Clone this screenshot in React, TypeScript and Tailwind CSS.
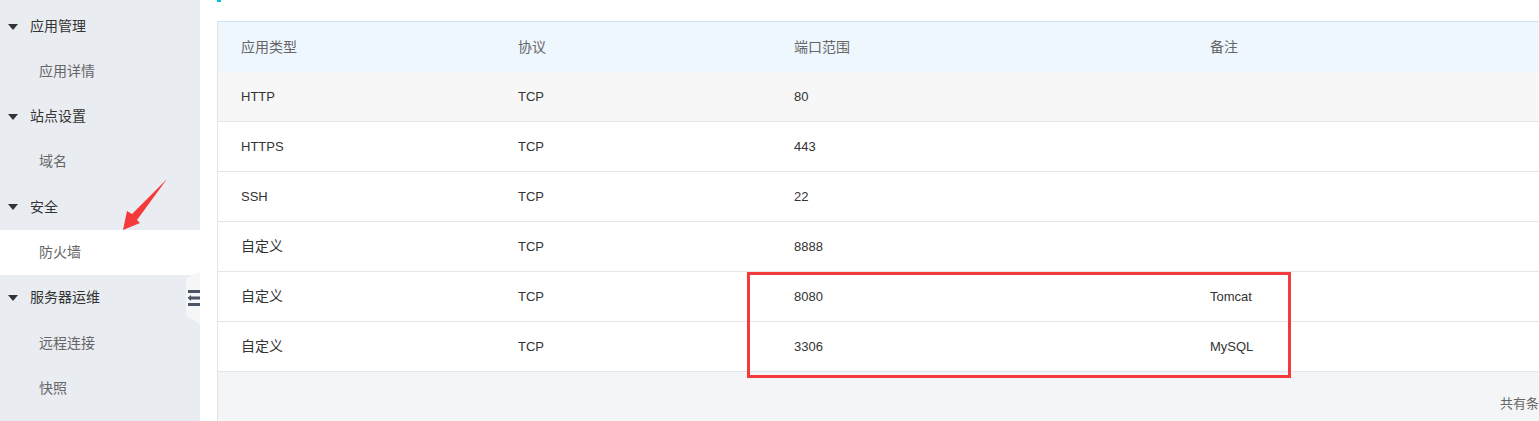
import React from "react";

const FONT = { fontFamily: '"Liberation Sans", "Noto Sans CJK SC", sans-serif' };

type NavItem = { label: string; group?: boolean; active?: boolean; h: string };

const NAV: NavItem[] = [
  { label: "应用管理", group: true, h: "h-[45px]" },
  { label: "应用详情", h: "h-[45px]" },
  { label: "站点设置", group: true, h: "h-[45px]" },
  { label: "域名", h: "h-[45px]" },
  { label: "安全", group: true, h: "h-[46px]" },
  { label: "防火墙", active: true, h: "h-[45px]" },
  { label: "服务器运维", group: true, h: "h-[45px]" },
  { label: "远程连接", h: "h-[46px]" },
  { label: "快照", h: "h-[45px]" },
];

const ROWS = [
  { type: "HTTP", proto: "TCP", port: "80", note: "", hover: true },
  { type: "HTTPS", proto: "TCP", port: "443", note: "" },
  { type: "SSH", proto: "TCP", port: "22", note: "" },
  { type: "自定义", proto: "TCP", port: "8888", note: "" },
  { type: "自定义", proto: "TCP", port: "8080", note: "Tomcat" },
  { type: "自定义", proto: "TCP", port: "3306", note: "MySQL" },
];

const isCjk = (s: string) => /[\u4e00-\u9fff]/.test(s);

function Cell({ text, w }: { text: string; w: string }) {
  return (
    <div className={`${w} shrink-0 pl-[23px] ${isCjk(text) ? "text-[14px]" : "text-[13px]"} text-[#333]`}>
      {text}
    </div>
  );
}

function Sidebar() {
  return (
    <aside className="w-[200px] shrink-0 bg-[#e9edf2] pt-[4px] relative">
      {NAV.map((item, i) => (
        <div
          key={i}
          className={`${item.h} flex items-center ${item.active ? "bg-white" : ""} ${
            item.group ? "pl-[8px]" : "pl-[39px]"
          }`}
        >
          {item.group && (
            <svg width="10" height="6" viewBox="0 0 10 6" className="mr-[12px]">
              <polygon points="0,0 10,0 5,6" fill="#333" />
            </svg>
          )}
          <span className={`text-[14px] ${item.group ? "text-[#333]" : "text-[#666]"}`}>{item.label}</span>
        </div>
      ))}

      {/* collapse handle */}
      <svg className="absolute left-[186px] top-[272px]" width="14" height="52" viewBox="0 0 14 52">
        <polygon points="14,0 0,6 0,44 14,52" fill="#f5f6f8" />
        <rect x="2" y="18" width="12" height="3" fill="#4b5565" />
        <rect x="5" y="24.5" width="9" height="3" fill="#4b5565" />
        <polygon points="1.5,26 5,23 5,29" fill="#4b5565" />
        <rect x="2" y="31" width="12" height="3" fill="#4b5565" />
      </svg>

      {/* red annotation arrow */}
      <svg className="absolute left-0 top-0 pointer-events-none" width="200" height="240" viewBox="0 0 200 240">
        <polygon
          points="123,230 127,211 132,214 167,179 137,220 140,223"
          fill="#f43a3a"
        />
      </svg>
    </aside>
  );
}

export default function App() {
  return (
    <div className="flex w-[1539px] h-[421px] overflow-hidden bg-white" style={FONT}>
      <Sidebar />

      <main className="relative flex-1 pl-[17px] pt-[21px] overflow-hidden">
        <div className="absolute left-[17px] top-0 w-[4px] h-[2px] bg-[#00c1de]" />

        <div className="w-[1400px] border-l border-[#e1e4e8]">
          {/* header */}
          <div className="flex items-center h-[51px] bg-[#eef6fe] border-t border-[#cfe2f5]">
            <div className="w-[277px] shrink-0 pl-[23px] text-[14px] text-[#666]">应用类型</div>
            <div className="w-[276px] shrink-0 pl-[23px] text-[14px] text-[#666]">协议</div>
            <div className="w-[416px] shrink-0 pl-[23px] text-[14px] text-[#666]">端口范围</div>
            <div className="flex-1 pl-[23px] text-[14px] text-[#666]">备注</div>
          </div>

          {ROWS.map((r, i) => (
            <div
              key={i}
              className={`flex items-center h-[50px] border-b border-[#e3e6eb] ${r.hover ? "bg-[#f7f7f7]" : "bg-white"}`}
            >
              <Cell text={r.type} w="w-[277px]" />
              <Cell text={r.proto} w="w-[276px]" />
              <Cell text={r.port} w="w-[416px]" />
              <Cell text={r.note} w="flex-1" />
            </div>
          ))}

          {/* footer */}
          <div className="h-[60px] bg-[#f4f5f7] flex">
            <div className="pl-[1282px] pt-[22px] text-[13px] text-[#666] whitespace-nowrap">共有条</div>
          </div>
        </div>

        {/* red highlight box */}
        <div className="absolute left-[547px] top-[272px] w-[544px] h-[106px] border-[3px] border-[#f43a3a] pointer-events-none" />
      </main>
    </div>
  );
}
